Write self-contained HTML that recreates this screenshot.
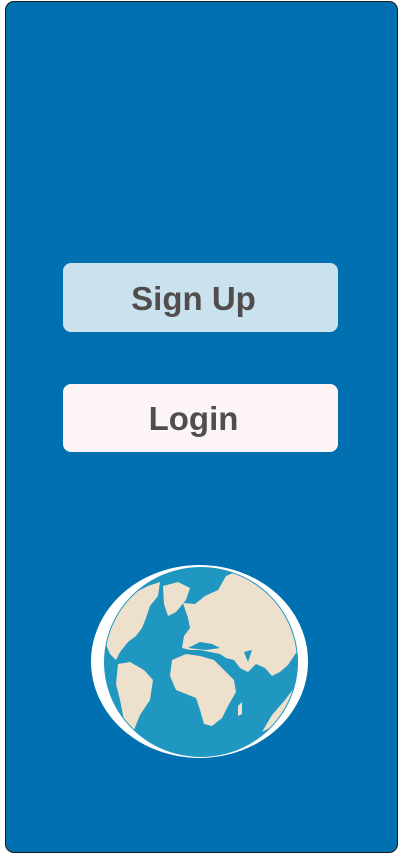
<!DOCTYPE html>
<html><head><meta charset="utf-8"><style>
html,body{margin:0;padding:0;width:403px;height:861px;background:#fff;overflow:hidden}
.frame{position:absolute;left:5px;top:1px;width:391px;height:850px;background:#0070b0;border:1px solid #1a1a1a;border-radius:9px}
.btn{position:absolute;left:63px;width:275px;border-radius:8px;font-family:"Liberation Sans",sans-serif;font-weight:bold;font-size:33px;color:#524d4d;text-align:center;padding-right:14px;box-sizing:border-box}
</style></head><body>
<div class="frame"></div>
<div class="btn" style="top:263px;height:69px;line-height:71px;background:#c9e2ee">Sign Up</div>
<div class="btn" style="top:384px;height:68px;line-height:70px;background:#fdf5f5">Login</div>
<svg style="position:absolute;left:0;top:0" width="403" height="861">
<defs><clipPath id="c"><ellipse cx="201" cy="662" rx="96" ry="94"/></clipPath></defs>
<ellipse cx="199.5" cy="661.5" rx="108.5" ry="96.5" fill="#fff"/>
<ellipse cx="201" cy="662" rx="97" ry="95" fill="#1f97c0"/>
<g fill="#ede0cc" clip-path="url(#c)">
<path d="M104,640 L112,615 L128,596 L148,586 L160,582 L158,596 L150,606 L146,618 L142,628 L136,636 L128,642 L120,652 L116,660 L110,654 Z"/>
<path d="M163,586 L178,582 L190,588 L186,600 L176,612 L168,616 L164,604 Z"/>
<path d="M118,664 L130,662 L144,670 L153,680 L150,700 L140,715 L132,735 L126,740 L124,720 L120,700 L116,684 Z"/>
<path d="M183,603 L195,604 L205,596 L218,590 L226,576 L240,570 L258,572 L275,580 L290,596 L300,630 L298,650 L288,665 L280,672 L272,676 L265,668 L256,664 L248,672 L240,668 L234,660 L226,658 L220,654 L210,652 L200,650 L190,650 L182,648 L184,636 L190,628 L188,618 Z"/>
<path d="M172,660 L186,654 L200,656 L214,660 L224,670 L234,680 L236,692 L228,706 L222,718 L212,726 L204,724 L200,710 L196,698 L186,694 L176,690 L170,676 Z"/>
<path d="M238,706 L242,702 L242,714 L238,716 Z"/>
<path d="M300,680 L285,700 L272,715 L262,732 L275,725 L295,705 Z"/>
</g>
<g fill="#1f97c0">
<path d="M188,648 L200,642 L212,644 L220,648 L206,650 Z"/>
<path d="M226,660 L232,672 L240,680 L236,666 Z"/>
<path d="M244,652 L252,650 L248,662 Z"/>
</g>
</svg>
</body></html>
